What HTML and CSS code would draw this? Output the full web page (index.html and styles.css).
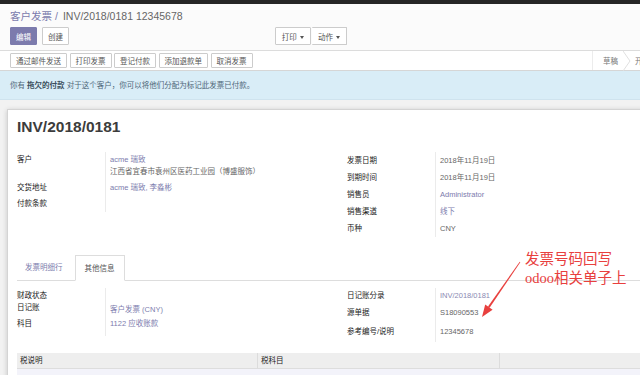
FILE: index.html
```html
<!DOCTYPE html>
<html lang="zh-CN">
<head>
    <meta charset="UTF-8">
    <meta name="viewport" content="width=device-width, initial-scale=1.0">
    <title>客户发票 - INV/2018/0181</title>
    <link rel="stylesheet" href="styles.css">
</head>
<body>
    <div class="topbar"></div>

    <div class="control-panel">
        <div class="breadcrumb">
            <a href="#" class="crumb-link">客户发票</a><span class="crumb-sep">/</span><span class="crumb-active">INV/2018/0181 12345678</span>
        </div>
        <div class="cp-row">
            <button class="btn btn-primary">编辑</button>
            <button class="btn">创建</button>
            <div class="cp-sidebar">
                <button class="btn btn-side">打印 <span class="caret"></span></button>
                <button class="btn btn-side">动作 <span class="caret"></span></button>
            </div>
        </div>
    </div>

    <div class="statusbar">
        <div class="status-buttons">
            <button class="btn-sm btn-primary">通过邮件发送</button>
            <button class="btn-sm btn-primary">打印发票</button>
            <button class="btn-sm btn-primary">登记付款</button>
            <button class="btn-sm">添加退款单</button>
            <button class="btn-sm">取消发票</button>
        </div>
        <div class="status-steps">
            <span class="step">草稿</span>
            <svg class="chevron" width="8" height="20" viewBox="0 0 8 20"><path d="M0 0 L7 10 L0 20" fill="none" stroke="#e0e0e0" stroke-width="1"/></svg>
            <span class="step">开票</span>
        </div>
    </div>

    <div class="alert">
        你有 <b>拖欠的付款</b> 对于这个客户，你可以将他们分配为标记此发票已付款。
    </div>

    <div class="sheet-wrap">
        <div class="sheet">
            <h1 class="title">INV/2018/0181</h1>

            <div class="groups">
                <div class="group group-left">
                    <div class="lbl">客户</div>
                    <div class="val"><a href="#">acme 瑞致</a><br>江西省宜春市袁州区医药工业园（博盛服饰）</div>
                    <div class="lbl">交货地址</div>
                    <div class="val"><a href="#">acme 瑞致, 李淼彬</a></div>
                    <div class="lbl">付款条款</div>
                    <div class="val"></div>
                </div>
                <div class="group group-right">
                    <div class="lbl">发票日期</div>
                    <div class="val">2018年11月19日</div>
                    <div class="lbl">到期时间</div>
                    <div class="val">2018年11月19日</div>
                    <div class="lbl">销售员</div>
                    <div class="val"><a href="#">Administrator</a></div>
                    <div class="lbl">销售渠道</div>
                    <div class="val"><a href="#">线下</a></div>
                    <div class="lbl">币种</div>
                    <div class="val">CNY</div>
                </div>
            </div>

            <div class="tabs">
                <a href="#" class="tab">发票明细行</a>
                <a href="#" class="tab tab-active">其他信息</a>
            </div>

            <div class="groups groups-other">
                <div class="group other-left">
                    <div class="lbl r1">财政状态</div>
                    <div class="val r1"></div>
                    <div class="lbl r2">日记账</div>
                    <div class="val r2 v-low"><a href="#">客户发票 (CNY)</a></div>
                    <div class="lbl r3">科目</div>
                    <div class="val r3"><a href="#">1122 应收账款</a></div>
                </div>
                <div class="group other-right">
                    <div class="lbl r1">日记账分录</div>
                    <div class="val r1"><a href="#" class="muted-link">INV/2018/0181</a></div>
                    <div class="lbl r2">源单据</div>
                    <div class="val r2">S18090553</div>
                    <div class="lbl r3">参考编号/说明</div>
                    <div class="val r3">12345678</div>
                </div>
            </div>

            <div class="tax-table">
                <div class="th">税说明</div>
                <div class="th">税科目</div>
                <div class="th"></div>
                <div class="td"></div>
                <div class="td"></div>
                <div class="td"></div>
            </div>
        </div>
    </div>

    <div class="note">发票号码回写<br>odoo相关单子上</div>
    <svg class="note-arrow" width="60" height="70" viewBox="0 0 60 70">
        <polygon points="50.3,7.2 49.7,6.8 18.0,51.5 19.6,52.7" fill="#e8403e"/>
        <polygon points="12,62 22.6,54.8 15.2,49.4" fill="#e8403e"/>
    </svg>
</body>
</html>
```

FILE: styles.css
```css
* {
    margin: 0;
    padding: 0;
    box-sizing: border-box;
}

body {
    font-family: 'Liberation Sans', 'Noto Sans CJK SC', sans-serif;
    font-size: 7.5px;
    color: #666;
    background: #f2f2f2;
    width: 640px;
    height: 375px;
    overflow: hidden;
    position: relative;
}

a {
    color: #7c7bad;
    text-decoration: none;
}

.topbar {
    height: 4px;
    background: #262626;
}

/* 控制面板 */
.control-panel {
    height: 47px;
    padding: 4px 10px 0;
    background: #fbfbfb;
    border-bottom: 1px solid #dcdcdc;
}

.breadcrumb {
    font-size: 10.5px;
    line-height: 17px;
    color: #666;
}

.crumb-sep {
    color: #7c7bad;
    margin: 0 5px 0 3px;
}

.cp-row {
    display: flex;
    width: 337px;
    margin-top: 2px;
}

.btn {
    height: 18px;
    padding: 0 5px;
    font-family: inherit;
    font-size: 7.5px;
    color: #555;
    background: #fff;
    border: 1px solid #ccc;
    border-radius: 1px;
    white-space: nowrap;
}

.btn + .btn {
    margin-left: 5px;
}

.btn-primary {
    color: #fff;
    background: #7c7bad;
    border-color: #7c7bad;
}

.cp-sidebar {
    display: flex;
    margin-left: auto;
}

.cp-sidebar .btn-side {
    margin: 0;
    padding: 0 6px;
}

.cp-sidebar .btn-side + .btn-side {
    margin-left: 1px;
    border-left: none;
}

.caret {
    display: inline-block;
    width: 0;
    height: 0;
    margin-left: 1px;
    vertical-align: middle;
    border-top: 3px solid #555;
    border-left: 2.5px solid transparent;
    border-right: 2.5px solid transparent;
}

/* 状态栏 */
.statusbar {
    display: flex;
    align-items: center;
    width: 680px;
    height: 20px;
    padding-left: 10px;
    background: #fff;
    border-bottom: 1px solid #d6d6d6;
}

.status-buttons {
    display: flex;
    gap: 2.5px;
}

.btn-sm {
    height: 15px;
    padding: 0 5px;
    font-family: inherit;
    font-size: 7.5px;
    color: #555;
    background: #fff;
    border: 1px solid #ccc;
    border-radius: 1px;
}

.status-steps {
    display: flex;
    align-items: center;
    width: 88px;
    height: 100%;
    margin-left: auto;
    border-left: 1px solid #ececec;
}

.step {
    color: #777;
    padding: 0 5px 0 10px;
    white-space: nowrap;
}

.step:last-child {
    padding-left: 4px;
}

.chevron {
    flex-shrink: 0;
}

.alert {
    height: 29px;
    line-height: 29px;
    padding: 0 10px;
    color: #4d6677;
    background: #d9edf7;
    border-bottom: 1px solid #cfe3ee;
}

.alert b {
    color: #3b4f5d;
}

/* 表单 */
.sheet-wrap {
    width: 700px;
    padding: 9px 0 0 7px;
}

.sheet {
    height: 280px;
    padding: 7px 9px 0;
    background: #fff;
    border: 1px solid #d4d4d4;
    box-shadow: 0 1px 5px rgba(0, 0, 0, 0.18);
}

.title {
    font-size: 15.5px;
    line-height: 20px;
    font-weight: bold;
    color: #3c3c3c;
    margin-bottom: 15px;
}

.groups {
    display: grid;
    grid-template-columns: 330px 330px;
    align-items: start;
}

.group {
    display: grid;
    grid-template-columns: 88px 1fr;
    line-height: 12px;
}

.lbl {
    color: #222;
}

.val {
    border-left: 1px solid #ebebeb;
    padding-left: 4px;
}

.group-left .lbl,
.group-left .val {
    padding-top: 2px;
    padding-bottom: 2px;
}

.group-right .lbl,
.group-right .val {
    padding-top: 2.5px;
    padding-bottom: 2.5px;
}

.tabs {
    display: flex;
    height: 26px;
    margin-top: 18px;
    border-bottom: 1px solid #ddd;
}

.tab {
    line-height: 25px;
    padding: 0 8px;
}

.tab-active {
    margin-left: 4px;
    padding: 0 9px;
    color: #555;
    background: #fff;
    border: 1px solid #ddd;
    border-bottom-color: #fff;
    height: 26px;
}

.groups-other {
    margin-top: 7px;
}

.other-left .r1 { padding-top: 2px; height: 14px; }
.other-left .r2 { height: 16px; }
.other-left .r3 { height: 18px; }
.other-left .v-low { padding-top: 2px; }

.other-right .r1 { padding: 2px 0; }
.other-right .r2 { padding: 3px 0; }
.other-right .r3 { padding: 4px 0; }

.other-right .val {
    padding-left: 4px;
}

.muted-link {
    color: #8a89b2;
}

.tax-table {
    display: grid;
    grid-template-columns: 241px 242px 1fr;
    margin-top: 11px;
}

.th {
    height: 16px;
    line-height: 16px;
    padding-left: 3px;
    color: #222;
    background: #eee;
    border-right: 1px solid #dcdcdc;
    border-bottom: 1px solid #ddd;
}

.td {
    height: 12px;
    background: #f3f3fa;
}

/* 标注 */
.note {
    position: absolute;
    left: 525px;
    top: 250px;
    font-family: 'Liberation Serif', 'Noto Sans CJK SC', serif;
    font-size: 14.5px;
    line-height: 19px;
    color: #e8403e;
}

.note-arrow {
    position: absolute;
    left: 470px;
    top: 255px;
}
```
